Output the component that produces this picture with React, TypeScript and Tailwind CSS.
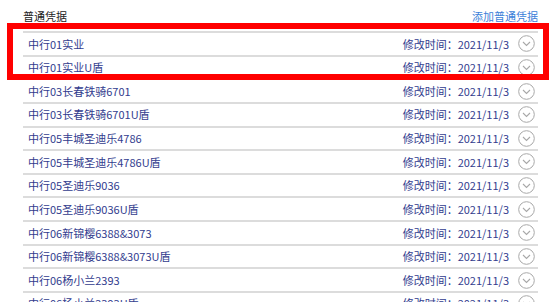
import React from 'react';

const names = [
  '中行01实业',
  '中行01实业U盾',
  '中行03长春铁骑6701',
  '中行03长春铁骑6701U盾',
  '中行05丰城圣迪乐4786',
  '中行05丰城圣迪乐4786U盾',
  '中行05圣迪乐9036',
  '中行05圣迪乐9036U盾',
  '中行06新锦樱6388&3073',
  '中行06新锦樱6388&3073U盾',
  '中行06杨小兰2393',
  '中行06杨小兰2393U盾',
];

const Chevron: React.FC = () => (
  <svg width="17" height="17" viewBox="0 0 17 17" className="shrink-0">
    <circle cx="8.5" cy="8.5" r="7.8" fill="none" stroke="#a8a8a8" strokeWidth="1" />
    <path d="M5 7 L8.5 10.5 L12 7" fill="none" stroke="#a8a8a8" strokeWidth="1.1" />
  </svg>
);

const App: React.FC = () => {
  return (
    <div
      className="relative w-[552px] h-[302px] overflow-hidden bg-white text-[11px]"
      style={{ fontFamily: '"Noto Sans CJK SC", "Noto Sans", sans-serif' }}
    >
      <div className="pl-[23px] w-[538px]">
        <div className="h-[31px] flex items-end justify-between pb-[7px]">
          <span className="text-[#222]">普通凭据</span>
          <span className="text-[#3b7fd9]">添加普通凭据</span>
        </div>
        <ul>
          {names.map(name => (
            <li
              key={name}
              className="h-[23.64px] border-t-2 border-[#dcdcdc] flex items-center justify-between pl-[5px] pr-[3px] text-[#323c8e]"
            >
              <span>{name}</span>
              <span className="flex items-center gap-[9px]">
                <span>修改时间：2021/11/3</span>
                <Chevron />
              </span>
            </li>
          ))}
        </ul>
      </div>
      <div className="absolute left-[7px] top-[23px] w-[542px] h-[57px] border-[6px] border-[#ff0000]" />
    </div>
  );
};

export default App;
